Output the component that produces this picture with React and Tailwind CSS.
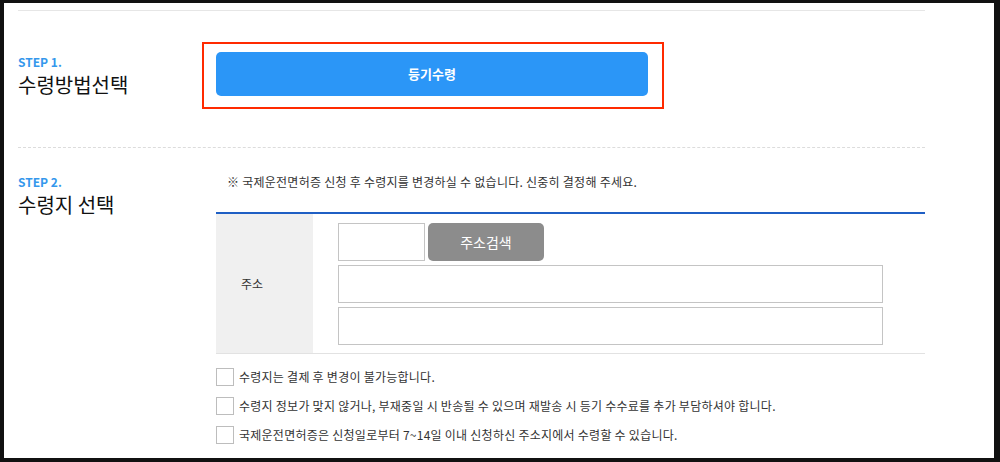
export default function App() {
  const font = { fontFamily: '"Noto Sans CJK KR", "Noto Sans", sans-serif' };
  const checks = [
    "수령지는 결제 후 변경이 불가능합니다.",
    "수령지 정보가 맞지 않거나, 부재중일 시 반송될 수 있으며 재발송 시 등기 수수료를 추가 부담하셔야 합니다.",
    "국제운전면허증은 신청일로부터 7~14일 이내 신청하신 주소지에서 수령할 수 있습니다.",
  ];
  return (
    <div
      className="w-[1000px] h-[462px] bg-[#111] pt-[3px] pl-[4px] pr-[6px] pb-[4px] flex"
      style={font}
    >
      <div className="flex-1 bg-white pl-[14px] pt-[7px] overflow-hidden">
        <div className="w-[907px]">
          <div className="h-px bg-[#e6e6e6]" />
          {/* Section 1 */}
          <div className="h-[137px] flex border-b border-dashed border-[#dcdcdc]">
            <div className="w-[184px] pt-[44px]">
              <div className="text-[12px] leading-[14px] font-bold text-[#3497ec]">STEP 1.</div>
              <div className="mt-[4px] text-[20px] leading-[24px] text-[#111]">수령방법선택</div>
            </div>
            <div className="pt-[31px]">
              <div className="border-2 border-[#ff2a00] pt-[8px] pb-[11px] pl-[12px] pr-[14px] w-[462px]">
                <div className="h-[44px] rounded-[5px] bg-[#2b96f7] flex items-center justify-center text-white text-[13px] font-bold">
                  등기수령
                </div>
              </div>
            </div>
          </div>
          {/* Section 2 */}
          <div className="flex">
            <div className="w-[198px] pt-[27px]">
              <div className="text-[12px] leading-[14px] font-bold text-[#3497ec]">STEP 2.</div>
              <div className="mt-[4px] text-[20px] leading-[24px] text-[#111]">수령지 선택</div>
            </div>
            <div className="flex-1">
              <div className="h-[64px] pt-[27px] pl-[11px] text-[12px] leading-[14px] tracking-[0.25px] text-[#333]">
                ※ 국제운전면허증 신청 후 수령지를 변경하실 수 없습니다. 신중히 결정해 주세요.
              </div>
              <div className="border-t-2 border-[#1f5fc4] border-b border-b-[#e2e2e2] flex">
                <div className="w-[97px] bg-[#f0f0f0] flex items-center pl-[25px] text-[12px] text-[#333]">
                  주소
                </div>
                <div className="pl-[25px] pt-[9px] pb-[8px] flex flex-col gap-[4px]">
                  <div className="flex gap-[3px]">
                    <div className="w-[87px] h-[38px] border border-[#c4c4c4] bg-white" />
                    <div className="w-[116px] h-[38px] rounded-[5px] bg-[#8c8c8c] flex items-center justify-center text-white text-[14px]">
                      주소검색
                    </div>
                  </div>
                  <div className="w-[545px] h-[38px] border border-[#c4c4c4] bg-white" />
                  <div className="w-[545px] h-[38px] border border-[#c4c4c4] bg-white" />
                </div>
              </div>
              <div className="pt-[14px] flex flex-col gap-[11px]">
                {checks.map((t) => (
                  <div key={t} className="flex items-center h-[18px]">
                    <div className="w-[18px] h-[18px] border-[1.5px] border-[#bdbdbd] bg-white shrink-0" />
                    <span className="ml-[5px] text-[12px] leading-[14px] tracking-[0.25px] text-[#333]">{t}</span>
                  </div>
                ))}
              </div>
            </div>
          </div>
        </div>
      </div>
    </div>
  );
}
